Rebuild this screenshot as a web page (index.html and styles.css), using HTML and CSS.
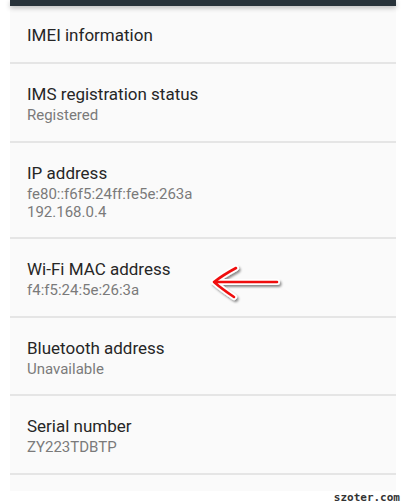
FILE: index.html
```html
<!DOCTYPE html>
<html>
<head>
  <title>Status</title>
  <link rel="stylesheet" href="styles.css">
</head>
<body>
  <div class="panel">
    <div class="topbar"></div>

    <div class="item single">
      <div class="title">IMEI information</div>
    </div>

    <div class="item">
      <div class="title">IMS registration status</div>
      <div class="summary">Registered</div>
    </div>

    <div class="item">
      <div class="title">IP address</div>
      <div class="summary">fe80::f6f5:24ff:fe5e:263a<br>192.168.0.4</div>
    </div>

    <div class="item">
      <div class="title">Wi-Fi MAC address</div>
      <div class="summary">f4:f5:24:5e:26:3a</div>
    </div>

    <div class="item">
      <div class="title">Bluetooth address</div>
      <div class="summary">Unavailable</div>
    </div>

    <div class="item">
      <div class="title">Serial number</div>
      <div class="summary">ZY223TDBTP</div>
    </div>

    <div class="item rest"></div>
  </div>

  <div class="watermark">szoter.com</div>

  <!-- red arrow drawn over the screenshot -->
  <svg class="arrow" width="80" height="48" viewBox="0 0 80 48">
    <defs>
      <filter id="shadow" x="-20%" y="-40%" width="140%" height="180%">
        <feDropShadow dx="1.5" dy="2" stdDeviation="1.2" flood-color="#000" flood-opacity="0.45"/>
      </filter>
    </defs>
    <g filter="url(#shadow)" fill="none" stroke-linecap="round" stroke-linejoin="round">
      <path d="M72 24 L9 24 M31 10 Q18 17 9 24 Q17 31 29 39" stroke="#fff" stroke-width="6"/>
      <path d="M72 24 L9 24 M31 10 Q18 17 9 24 Q17 31 29 39" stroke="#f01010" stroke-width="2.6"/>
    </g>
  </svg>
</body>
</html>
```

FILE: styles.css
```css
body {
  margin: 0;
  background-color: white;
  font-family: Roboto, "Noto Sans", sans-serif;
  position: relative;
  height: 503px;
  overflow: hidden;
}
.panel {
  margin-left: 10px;
  width: 386px;
  background-color: #fafafa;
}
.topbar {
  height: 6px;
  background-color: #28333a;
  box-shadow: 0 2px 5px rgba(0, 0, 0, 0.25);
  position: relative;
}
.item {
  padding: 19px 17px 16.5px 17px;
  border-bottom: 2px solid #e5e5e5;
}
.item.single {
  padding-top: 18px;
  padding-bottom: 16px;
}
.item.rest {
  height: 16px;
  padding: 0;
  border-bottom: none;
}
.title {
  font-size: 17px;
  line-height: 22px;
  color: #262626;
}
.summary {
  margin-top: 1px;
  font-size: 15px;
  line-height: 18px;
  color: #7a7a7a;
}
.watermark {
  text-align: right;
  padding-right: 1px;
  font-family: "DejaVu Sans Mono", monospace;
  font-weight: bold;
  font-size: 11px;
  line-height: 10px;
  color: #333;
  margin-top: 2px;
}
.arrow {
  position: absolute;
  left: 205px;
  top: 258px;
}
```
